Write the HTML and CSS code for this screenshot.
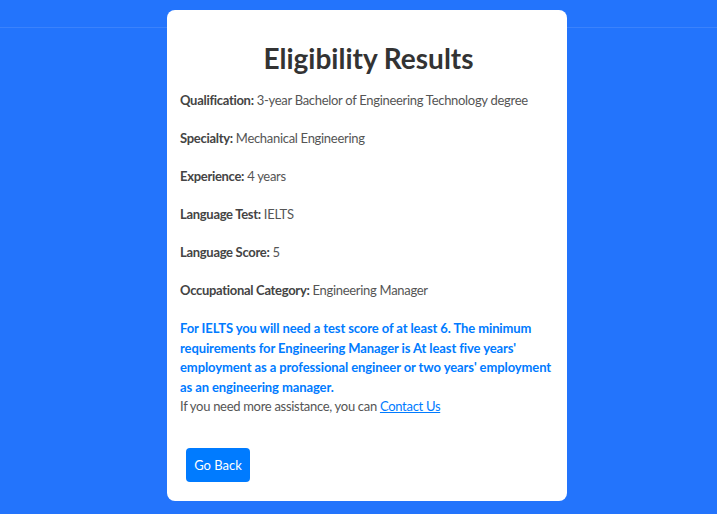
FILE: index.html
```html
<!DOCTYPE html>
<html lang="en">
<head>
  <meta charset="UTF-8">
  <title>Eligibility Results</title>
  <meta name="viewport" content="width=device-width, initial-scale=1">
  <link rel="stylesheet" href="styles.css">
</head>
<body>
  <div class="card">
    <h1>Eligibility Results</h1>
    <p><strong>Qualification:</strong> 3-year Bachelor of Engineering Technology degree</p>
    <p><strong>Specialty:</strong> Mechanical Engineering</p>
    <p><strong>Experience:</strong> 4 years</p>
    <p><strong>Language Test:</strong> IELTS</p>
    <p><strong>Language Score:</strong> 5</p>
    <p><strong>Occupational Category:</strong> Engineering Manager</p>
    <div class="result">
      <strong>For IELTS you will need a test score of at least 6. The minimum requirements for Engineering Manager is At least five years' employment as a professional engineer or two years' employment as an engineering manager.</strong><br>
      If you need more assistance, you can <a href="#">Contact Us</a>
    </div>
    <button>Go Back</button>
  </div>
</body>
</html>
```

FILE: styles.css
```css
body {
  margin: 0; padding: 0 0 0 17px;
  background: #2374fc linear-gradient(#2374fc 27px, #3a82fc 27px, #3a82fc 28px, #2374fc 28px);
  color: #555;
  font-family: Lato, sans-serif;
  font-size: 13px;
  letter-spacing: -0.3px;
  height: 514px;
}
.card {
  width: 377px;
  margin: 10px auto 0;
  padding: 13px 10px 19px 13px;
  background: #fff;
  border-radius: 8px;
}
h1 {
  margin: 17px 0 14px;
  text-align: center;
  font-size: 28px;
  line-height: 36px;
  letter-spacing: 0;
  color: #333;
}
p { margin: 0 0 18px; line-height: 20px; }
p strong { color: #444; }
.result { line-height: 19.5px; margin-top: 19px; }
.result strong { color: #007bff; letter-spacing: -0.1px; }
.result a { color: #007bff; }
button {
  margin: 31px 0 0 6px;
  padding: 0;
  width: 64px;
  height: 34px;
  border: none; border-radius: 4px;
  background: #007bff; color: #fff;
  font-family: inherit; font-size: 13px;
  letter-spacing: 0;
  cursor: pointer;
}
```
